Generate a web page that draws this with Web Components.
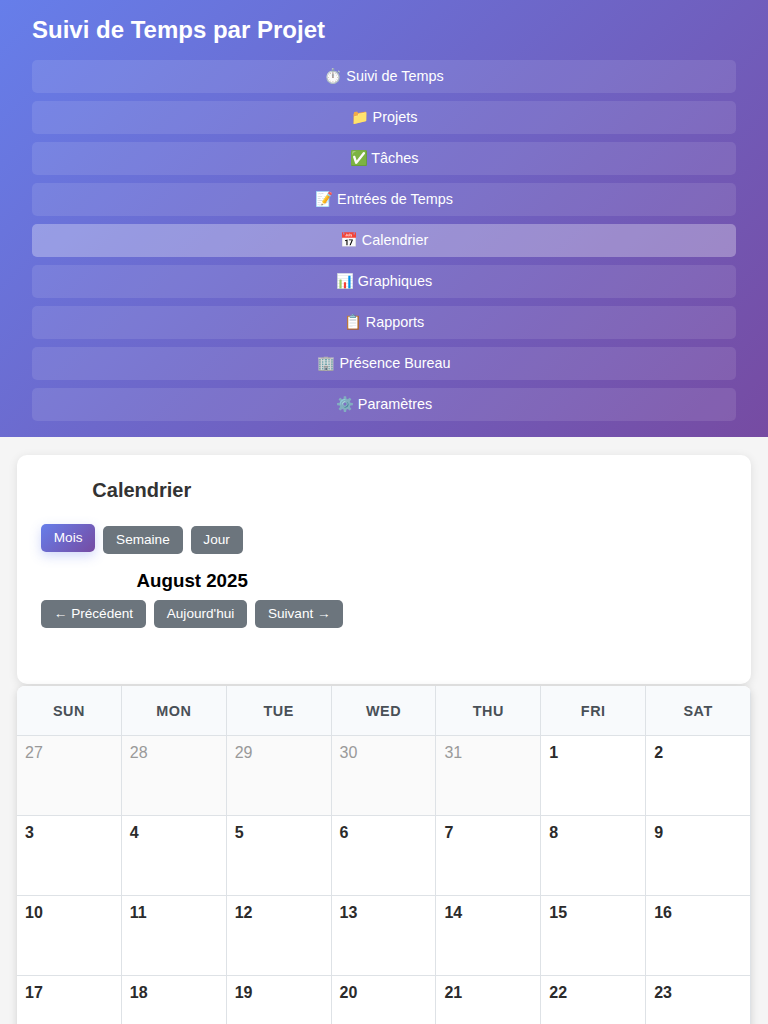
<!DOCTYPE html>
<html lang="fr">
<head>
<meta charset="utf-8">
<title>Suivi de Temps par Projet</title>
<style>
html { overflow: hidden; }
body { margin: 0; height: 1024px; overflow: hidden; background: #f5f5f5; color: #333; font: 16px "Liberation Sans", Arial, sans-serif; }
main { padding: 18px 17px 0; }
</style>
</head>
<body>
<app-header heading="Suivi de Temps par Projet">
  <nav-item>⏱️ Suivi de Temps</nav-item>
  <nav-item>📁 Projets</nav-item>
  <nav-item>✅ Tâches</nav-item>
  <nav-item>📝 Entrées de Temps</nav-item>
  <nav-item active>📅 Calendrier</nav-item>
  <nav-item>📊 Graphiques</nav-item>
  <nav-item>📋 Rapports</nav-item>
  <nav-item>🏢 Présence Bureau</nav-item>
  <nav-item>⚙️ Paramètres</nav-item>
</app-header>
<main>
  <calendar-toolbar>
    <span slot="title">Calendrier</span>
    <tool-button slot="views" active>Mois</tool-button>
    <tool-button slot="views">Semaine</tool-button>
    <tool-button slot="views">Jour</tool-button>
    <span slot="period">August 2025</span>
    <tool-button slot="steps">← Précédent</tool-button>
    <tool-button slot="steps">Aujourd'hui</tool-button>
    <tool-button slot="steps">Suivant →</tool-button>
  </calendar-toolbar>
  <month-grid year="2025" month="8"></month-grid>
</main>
<script>
class ShadowElement extends HTMLElement {
  constructor() {
    super();
    this.attachShadow({ mode: "open" }).innerHTML = this.constructor.markup;
  }
}

customElements.define("app-header", class extends ShadowElement {
  static markup = `<style>
    :host { display: block; box-sizing: border-box; height: 437px; padding: 16px 32px; background: linear-gradient(135deg, #667eea 0%, #764ba2 100%); color: #fff; }
    h1 { margin: 0 0 16px; font-size: 24px; line-height: 28px; font-weight: 700; }
    nav { display: flex; flex-direction: column; gap: 8px; }
  </style><h1></h1><nav><slot></slot></nav>`;
  connectedCallback() { this.shadowRoot.querySelector("h1").textContent = this.getAttribute("heading"); }
});

customElements.define("nav-item", class extends ShadowElement {
  static markup = `<style>
    :host { display: block; height: 33px; }
    button { display: block; box-sizing: border-box; width: 100%; height: 33px; padding: 8px 16px; border: 0; border-radius: 5px; background: rgba(255,255,255,.1); color: inherit; font: 14.4px "Liberation Sans", Arial, sans-serif; }
    :host([active]) button { background: rgba(255,255,255,.3); }
  </style><button><slot></slot></button>`;
});

customElements.define("tool-button", class extends ShadowElement {
  static markup = `<style>
    :host { display: block; }
    button { display: block; box-sizing: border-box; height: 28px; padding: 0 12.8px 2px; border: 0; border-radius: 5px; background: #6c757d; color: #fff; white-space: nowrap; font: 13.6px "Liberation Sans", Arial, sans-serif; }
    :host([active]) button { background: linear-gradient(135deg, #667eea, #764ba2); transform: translateY(-2px); box-shadow: 0 4px 12px rgba(102,126,234,.3); }
  </style><button><slot></slot></button>`;
});

customElements.define("calendar-toolbar", class extends ShadowElement {
  static markup = `<style>
    :host { display: flex; flex-direction: column; align-items: flex-start; box-sizing: border-box; height: 229px; padding: 24px; border-radius: 10px; background: #fff; box-shadow: 0 2px 10px rgba(0,0,0,.1); }
    section { text-align: center; }
    h2 { margin: 0 0 24px; font-size: 20px; line-height: 23px; }
    h3 { margin: 16px 0 8px; font-size: 18.72px; line-height: 22px; color: #000; }
    .row { display: flex; gap: 8px; }
  </style>
  <section><h2><slot name="title"></slot></h2><div class="row"><slot name="views"></slot></div></section>
  <section><h3><slot name="period"></slot></h3><div class="row"><slot name="steps"></slot></div></section>`;
});

customElements.define("month-grid", class extends ShadowElement {
  static markup = `<style>
    :host { display: block; margin-top: 2px; }
    .grid { display: grid; grid-template-columns: repeat(7, 1fr); grid-template-rows: 50px; grid-auto-rows: 80px; overflow: hidden; border-radius: 8px; background: #fff; box-shadow: 0 2px 8px rgba(0,0,0,.15); }
    .grid > div { box-sizing: border-box; border-right: 1px solid #dee2e6; border-bottom: 1px solid #dee2e6; }
    .head { display: flex; align-items: center; justify-content: center; background: #f8fafc; color: #495057; font-size: 14.4px; font-weight: 700; letter-spacing: .5px; }
    .day { padding: 8px; line-height: 18px; font-weight: 700; color: #2b2b2b; }
    .other { background: #fafafa; color: #999; font-weight: 400; }
  </style><div class="grid"></div>`;
  connectedCallback() {
    const year = +this.getAttribute("year"), month = +this.getAttribute("month") - 1;
    const grid = this.shadowRoot.querySelector(".grid");
    const add = (cls, text) => {
      const cell = document.createElement("div");
      cell.className = cls;
      cell.textContent = text;
      grid.append(cell);
    };
    ["SUN", "MON", "TUE", "WED", "THU", "FRI", "SAT"].forEach(d => add("head", d));
    const offset = new Date(year, month, 1).getDay();
    for (let i = 0; i < 28; i++) {
      const d = new Date(year, month, 1 - offset + i);
      add(d.getMonth() === month ? "day" : "day other", d.getDate());
    }
  }
});
</script>
</body>
</html>
